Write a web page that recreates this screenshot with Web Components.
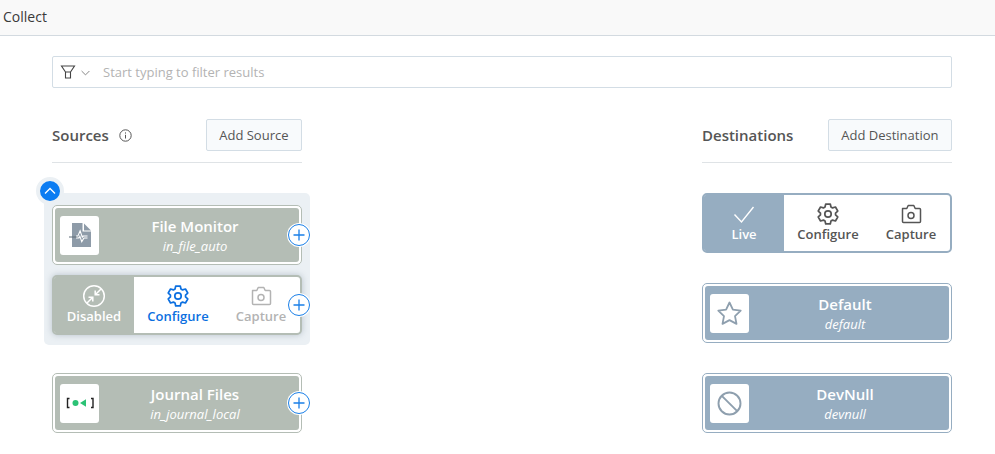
<!DOCTYPE html>
<html lang="en">
<head>
<meta charset="utf-8">
<title>Collect</title>
<style>
  html, body { margin: 0; padding: 0; background: #fff; }
  body { font-family: "Open Sans", "Liberation Sans", sans-serif; color: #555; height: 454px; overflow: hidden; }
</style>
</head>
<body>
<app-header>Collect</app-header>
<collect-page>
  <filter-bar slot="filter" placeholder="Start typing to filter results"></filter-bar>

  <io-column slot="left" heading="Sources" button="Add Source" info>
    <tile-group>
      <io-tile name="File Monitor" sub="in_file_auto" icon="file" tone="green" port></io-tile>
      <action-tile state="Disabled" icon="disabled" tone="green" active raised port></action-tile>
    </tile-group>
    <io-tile name="Journal Files" sub="in_journal_local" icon="journal" tone="green" port></io-tile>
  </io-column>

  <io-column slot="right" heading="Destinations" button="Add Destination">
    <action-tile state="Live" icon="check" tone="blue"></action-tile>
    <io-tile name="Default" sub="default" icon="star" tone="blue"></io-tile>
    <io-tile name="DevNull" sub="devnull" icon="ban" tone="blue"></io-tile>
  </io-column>
</collect-page>

<script>
"use strict";

// six rounded teeth, one pointing straight up
function gearPath() {
  const at = (deg, r) => {
    const a = (deg * Math.PI) / 180;
    return `${(12 + r * Math.cos(a)).toFixed(2)} ${(12 + r * Math.sin(a)).toFixed(2)}`;
  };
  let d = "";
  for (let i = 0; i < 6; i++) {
    const c = -90 + i * 60;
    d += `${i ? "L" : "M"}${at(c - 13, 10.2)}L${at(c + 13, 10.2)}L${at(c + 23, 7.6)}L${at(c + 37, 7.6)}`;
  }
  return d + "z";
}

const ICONS = {
  file: `<svg viewBox="0 0 39 39" width="39" height="39">
      <path fill="#8e9ba8" d="M12 7h10.500v8.500H31V31H12z"/>
      <path fill="#8e9ba8" d="M24 7.500l7 7h-7z"/>
      <path fill="none" stroke="#fff" stroke-width="3" d="M16 21h2.500l1.500-3.500 2 6 1.500-2.500h4"/>
      <path fill="none" stroke="#5f6c78" stroke-width="1" d="M9 21h8.500"/>
      <path fill="none" stroke="#8e9ba8" stroke-width="1" d="M17.500 21h1l1.500-3.500 2 6 1.500-2.500h4.500"/>
    </svg>`,
  journal: `<svg viewBox="0 0 39 39" width="39" height="39">
      <path fill="none" stroke="#222" stroke-width="1.400" d="M9.500 14.500h-2v9h2M31 14.500h2v9h-2"/>
      <circle cx="15.500" cy="19" r="3" fill="#2bc275"/>
      <path fill="#2bc275" d="M20 19l6-3.800v7.600z"/>
    </svg>`,
  star: `<svg viewBox="0 0 39 39" width="39" height="39">
      <path fill="none" stroke="#8e9fae" stroke-width="1.800" stroke-linejoin="round" d="M19.500 8.500l3.400 7.200 7.800 1-5.700 5.400 1.500 7.800-7-3.800-7 3.800 1.500-7.800-5.700-5.400 7.800-1z"/>
    </svg>`,
  ban: `<svg viewBox="0 0 39 39" width="39" height="39">
      <circle cx="19.500" cy="19.500" r="11" fill="none" stroke="#8e9fae" stroke-width="1.900"/>
      <path stroke="#8e9fae" stroke-width="1.900" d="M11.800 11.800l15.400 15.400"/>
    </svg>`,
  check: `<svg viewBox="0 0 24 24" width="24" height="24">
      <path fill="none" stroke="#fff" stroke-width="1.400" d="M2.500 12.500l7 7.500 12-15"/>
    </svg>`,
  disabled: `<svg viewBox="0 0 24 24" width="24" height="24" fill="none" stroke="#fff" stroke-width="1.500">
      <circle cx="12" cy="12" r="10.300"/>
      <path d="M19 5l-5.500 5.500M13.200 6.500v4.300h4.300M5 19l5.500-5.500M10.800 17.500v-4.300H6.500"/>
    </svg>`,
  gear: `<svg viewBox="0 0 24 24" width="24" height="24" fill="none" stroke="currentColor" stroke-width="1.700" stroke-linejoin="round">
      <circle cx="12" cy="12" r="3.200"/>
      <path d="${gearPath()}"/>
    </svg>`,
  camera: `<svg viewBox="0 0 24 24" width="24" height="24" fill="none" stroke="currentColor" stroke-width="1.500" stroke-linejoin="round">
      <path d="M3.500 6.500h4.300l1.400-3h5.600l1.400 3h4.300a1 1 0 0 1 1 1v12a1 1 0 0 1-1 1h-16a1 1 0 0 1-1-1v-12a1 1 0 0 1 1-1z"/>
      <circle cx="12" cy="13.500" r="3"/>
    </svg>`,
};

const TONES = { green: "#b4bdb5", blue: "#96adc1" };

function toneOf(el) {
  return TONES[el.getAttribute("tone")] || TONES.green;
}

class AppHeader extends HTMLElement {
  constructor() {
    super();
    this.attachShadow({ mode: "open" });
    this.shadowRoot.innerHTML = `
      <style>
        :host {
          display: flex;
          align-items: center;
          box-sizing: border-box;
          height: 36px;
          padding: 0 0 2px 3px;
          background: #f9f9f9;
          border-bottom: 1px solid #d3dae0;
          font-size: 14px;
          color: #3a3a3a;
        }
      </style>
      <slot></slot>
    `;
  }
}

class CollectPage extends HTMLElement {
  constructor() {
    super();
    this.attachShadow({ mode: "open" });
    this.shadowRoot.innerHTML = `
      <style>
        :host {
          display: block;
          padding: 20px 43px 0 52px;
        }
        .columns {
          display: flex;
          justify-content: space-between;
          margin-top: 31px;
        }
      </style>
      <slot name="filter"></slot>
      <div class="columns">
        <slot name="left"></slot>
        <slot name="right"></slot>
      </div>
    `;
  }
}

class FilterBar extends HTMLElement {
  constructor() {
    super();
    this.attachShadow({ mode: "open" });
  }

  connectedCallback() {
    this.shadowRoot.innerHTML = `
      <style>
        :host {
          display: flex;
          align-items: center;
          box-sizing: border-box;
          height: 32px;
          padding-left: 7px;
          border: 1px solid #d3dde5;
          border-radius: 2px;
          font-size: 13px;
          color: #b3b3b3;
        }
        svg { display: block; flex: none; }
        .chev { margin: 1px 0 0 5px; }
        span { margin-left: 13px; }
      </style>
      <svg width="16" height="14" viewBox="0 0 16 14" fill="none" stroke="#444" stroke-width="1.100">
        <path d="M1.500 1h13l-4 6h-5zM5.500 7v6h5V7"/>
      </svg>
      <svg class="chev" width="9" height="6" viewBox="0 0 9 6" fill="none" stroke="#888" stroke-width="1">
        <path d="M.6 1l3.900 3.900L8.400 1"/>
      </svg>
      <span>${this.getAttribute("placeholder")}</span>
    `;
  }
}

class IoColumn extends HTMLElement {
  constructor() {
    super();
    this.attachShadow({ mode: "open" });
  }

  connectedCallback() {
    const info = this.hasAttribute("info")
      ? `<svg width="13" height="13" viewBox="0 0 13 13" fill="none" stroke="#555" stroke-width="1">
           <circle cx="6.500" cy="6.500" r="5.700"/><path d="M6.500 5.800v3.700M6.500 3.400v1.200"/>
         </svg>`
      : "";
    this.shadowRoot.innerHTML = `
      <style>
        :host {
          display: block;
          width: 250px;
        }
        .head {
          display: flex;
          align-items: center;
          height: 32px;
          padding-bottom: 11px;
          border-bottom: 1px solid #dfe3e6;
        }
        h2 {
          margin: 0;
          font-size: 15px;
          font-weight: 600;
          color: #555;
        }
        svg { margin-left: 10px; }
        button {
          margin-left: auto;
          height: 32px;
          padding: 0 12.5px;
          background: #f8fafc;
          border: 1px solid #d3dde5;
          border-radius: 2px;
          font: inherit;
          font-size: 13px;
          color: #555;
        }
        .list {
          display: flex;
          flex-direction: column;
          gap: 30px;
          margin-top: 30px;
        }
      </style>
      <div class="head">
        <h2>${this.getAttribute("heading")}</h2>
        ${info}
        <button>${this.getAttribute("button")}</button>
      </div>
      <div class="list"><slot></slot></div>
    `;
  }
}

class TileGroup extends HTMLElement {
  constructor() {
    super();
    this.attachShadow({ mode: "open" });
    this.shadowRoot.innerHTML = `
      <style>
        :host {
          display: flex;
          flex-direction: column;
          gap: 10px;
          position: relative;
          margin: 0 -8px -2px;
          padding: 12px 8px 10px;
          background: #ebf0f4;
          border-radius: 5px;
        }
        .toggle {
          position: absolute;
          left: -8px;
          top: -16px;
          width: 20px;
          height: 20px;
          border: 4px solid #ebf0f4;
          border-radius: 50%;
          background: #0b7cf2;
          display: flex;
          align-items: center;
          justify-content: center;
        }
      </style>
      <div class="toggle">
        <svg width="12" height="8" viewBox="0 0 12 8" fill="none" stroke="#fff" stroke-width="1.300"><path d="M1 6.500l5-5 5 5"/></svg>
      </div>
      <slot></slot>
    `;
  }
}

class AddPort extends HTMLElement {
  constructor() {
    super();
    this.attachShadow({ mode: "open" });
    this.shadowRoot.innerHTML = `
      <style>
        :host {
          position: absolute;
          right: var(--port-right, -9px);
          top: 50%;
          transform: translateY(-50%);
          box-sizing: border-box;
          width: 22px;
          height: 22px;
          display: flex;
          align-items: center;
          justify-content: center;
          background: #fff;
          border: 1px solid #1a7fe8;
          border-radius: 50%;
          box-shadow: 0 0 0 1px #fff;
        }
      </style>
      <svg width="12" height="12" viewBox="0 0 12 12" stroke="#1a7fe8" stroke-width="1.300"><path d="M6 .5v11M.5 6h11"/></svg>
    `;
  }
}

class IoTile extends HTMLElement {
  constructor() {
    super();
    this.attachShadow({ mode: "open" });
  }

  connectedCallback() {
    const tone = toneOf(this);
    this.shadowRoot.innerHTML = `
      <style>
        :host {
          display: block;
          position: relative;
          box-sizing: border-box;
          height: 60px;
          padding: 2px;
          background: #fff;
          border: 1px solid ${tone};
          border-radius: 5px;
        }
        .fill {
          display: flex;
          align-items: center;
          height: 100%;
          padding-left: 5px;
          background: ${tone};
          border-radius: 3px;
          color: #fff;
        }
        .icon {
          flex: none;
          width: 39px;
          height: 39px;
          background: #fff;
          border-radius: 3px;
        }
        .icon svg { display: block; }
        .text {
          flex: 1;
          text-align: center;
          padding: 1px 8px 0 0;
          line-height: 20px;
        }
        .name { font-size: 15px; font-weight: 600; }
        .sub { font-size: 13px; font-style: italic; }
      </style>
      <div class="fill">
        <div class="icon">${ICONS[this.getAttribute("icon")]}</div>
        <div class="text">
          <div class="name">${this.getAttribute("name")}</div>
          <div class="sub">${this.getAttribute("sub")}</div>
        </div>
      </div>
      ${this.hasAttribute("port") ? "<add-port></add-port>" : ""}
    `;
  }
}

class ActionTile extends HTMLElement {
  constructor() {
    super();
    this.attachShadow({ mode: "open" });
  }

  connectedCallback() {
    const tone = toneOf(this);
    const active = this.hasAttribute("active");
    this.shadowRoot.innerHTML = `
      <style>
        :host {
          display: block;
          position: relative;
          box-sizing: border-box;
          height: 60px;
          background: #fff;
          border: 2px solid ${tone};
          border-radius: 5px;
          --port-right: -10px;
          ${this.hasAttribute("raised") ? "box-shadow: 0 0 6px rgba(120,135,150,.45);" : ""}
        }
        .row {
          display: grid;
          grid-template-columns: 80px 88px 78px;
          height: 100%;
          font-size: 13px;
          font-weight: 600;
        }
        .cell {
          display: flex;
          flex-direction: column;
          align-items: center;
          padding-top: 7px;
          box-sizing: border-box;
          color: #555;
        }
        .cell svg { display: block; }
        .cell span { line-height: 16px; }
        .state { background: ${tone}; color: #fff; border-radius: 2px 0 0 2px; }
        .on { color: #0b6fe0; }
        .off { color: #b3b3b3; }
      </style>
      <div class="row">
        <div class="cell state">${ICONS[this.getAttribute("icon")]}<span>${this.getAttribute("state")}</span></div>
        <div class="cell ${active ? "on" : ""}">${ICONS.gear}<span>Configure</span></div>
        <div class="cell ${active ? "off" : ""}">${ICONS.camera}<span>Capture</span></div>
      </div>
      ${this.hasAttribute("port") ? "<add-port></add-port>" : ""}
    `;
  }
}

customElements.define("app-header", AppHeader);
customElements.define("collect-page", CollectPage);
customElements.define("filter-bar", FilterBar);
customElements.define("io-column", IoColumn);
customElements.define("tile-group", TileGroup);
customElements.define("add-port", AddPort);
customElements.define("io-tile", IoTile);
customElements.define("action-tile", ActionTile);
</script>
</body>
</html>
